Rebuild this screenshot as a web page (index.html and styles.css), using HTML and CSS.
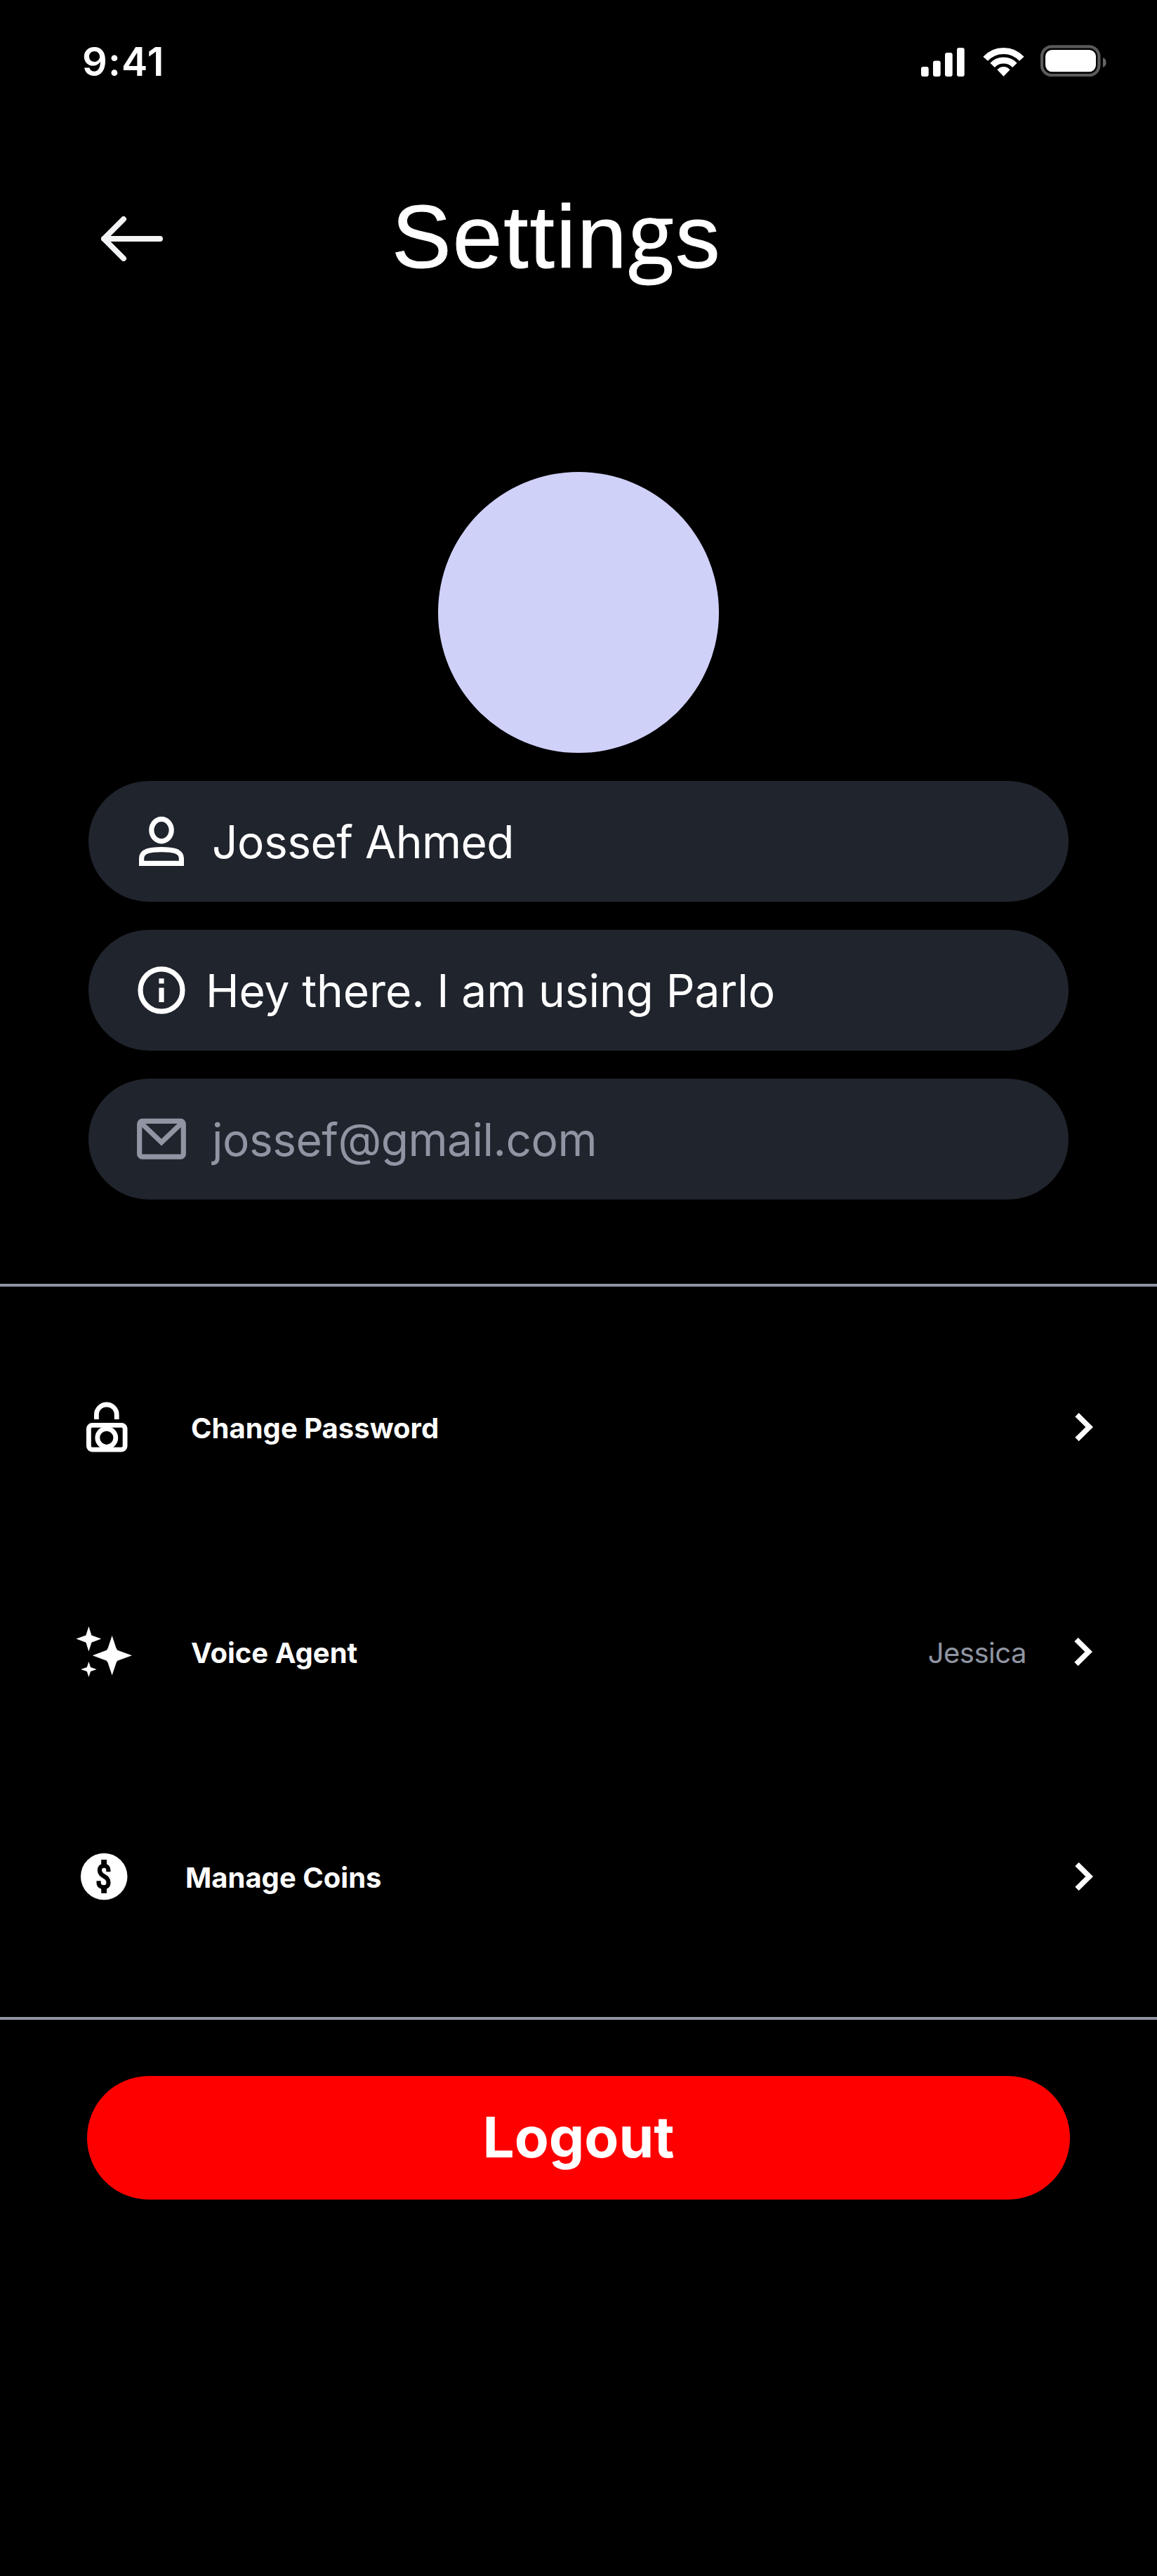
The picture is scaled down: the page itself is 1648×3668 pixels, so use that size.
FILE: index.html
```html
<!DOCTYPE html>
<html lang="en">
<head>
<meta charset="utf-8">
<title>Settings</title>
<link rel="stylesheet" href="styles.css">
</head>
<body>
<div class="status">
  <span class="time">9:41</span>
  <svg class="signal" width="62" height="46" viewBox="0 0 62 46"><rect x="0" y="31" width="10.7" height="14" rx="3"/><rect x="17" y="22.5" width="10.7" height="22.5" rx="3"/><rect x="34" y="11" width="10.7" height="34" rx="3"/><rect x="51" y="4" width="10.7" height="41" rx="3"/></svg>
  <svg class="wifi" width="59" height="46" viewBox="0 -4 59 46"><g fill="none" stroke="#fff" stroke-width="9"><path d="M3.7 15.8A35 35 0 0 1 55.3 15.8"/><path d="M13.6 24.9A22 22 0 0 1 45.4 24.9"/></g><path d="M29.5 40.8L20.4 31.3Q24.2 27 29.5 27Q34.8 27 38.6 31.3Z"/></svg>
  <svg class="battery" width="94" height="46" viewBox="0 0 94 46"><rect x="2" y="2.4" width="81.4" height="40.6" rx="14" fill="none" stroke="#5b5b5b" stroke-width="4.2"/><rect x="7" y="7" width="72" height="31.3" rx="9.5"/><path d="M89 18Q93.6 20 93.6 25Q93.6 30 89 32Z" fill="#666"/></svg>
</div>
<header class="header">
  <svg width="88" height="64" viewBox="0 0 88 64"><path d="M84 32H4M32 4L4 32L32 60" fill="none" stroke="#f3f4f6" stroke-width="8" stroke-linecap="round" stroke-linejoin="round"/></svg>
  <h1 class="title">Settin<span class="title-g">g</span>s</h1>
</header>
<main>
  <div class="avatar"></div>
  <section class="fields">
    <div class="field">
      <svg width="72" height="80" viewBox="0 0 72 80"><g fill="none" stroke="#fff" stroke-width="7.2"><ellipse cx="36" cy="24.1" rx="14.2" ry="15.7"/><path d="M7.6 71.4V64.5C7.6 53.5 20 51.6 36 51.6S64.4 53.5 64.4 64.5V71.4Z"/></g></svg>
      <span class="name">Jossef Ahmed</span>
    </div>
    <div class="field">
      <svg width="72" height="80" viewBox="0 0 72 80"><ellipse cx="36" cy="40" rx="30" ry="30.2" fill="none" stroke="#fff" stroke-width="7.2"/><path d="M32.4 23.2h7.2v7.2h-7.2zM32.4 36.6h7.2v20.4h-7.2z"/></svg>
      <span class="about">Hey there. I am using Parlo</span>
    </div>
    <div class="field muted">
      <svg width="72" height="80" viewBox="0 0 72 80"><g fill="none" stroke="#9095a3" stroke-width="7.2"><rect x="4.7" y="14.4" width="62.6" height="50.8" rx="4"/><path d="M6.5 16.5L36 44.5L65.5 16.5"/></g></svg>
      <span class="email">jossef@gmail.com</span>
    </div>
  </section>
  <nav class="menu">
    <div class="item">
      <svg width="88" height="80" viewBox="0 0 88 80"><g fill="none" stroke="#fff" stroke-width="6.8"><path d="M33.4 27V20.4a14.4 14.4 0 0 1 28.8 0V27"/><rect x="22.4" y="35.4" width="51.7" height="34.7" rx="5"/><circle cx="47.8" cy="53.3" r="13"/></g></svg>
      <span class="label">Change Password</span>
      <svg class="chevron" width="26" height="40" viewBox="0 0 26 40"><path d="M3 2.5L20.7 20L3 37.5"/></svg>
    </div>
    <div class="item">
      <svg width="88" height="80" viewBox="0 0 88 80"><path d="M55.6 15L61.6 33L63.4 35.7L84 43.2L63.4 50.7L61.6 53.4L55.6 71.5L49.6 53.4L47.8 50.7L27.8 43.2L47.8 35.7L49.6 33ZM22.4 1.8L26.4 14.5L40.3 19.6L26.4 24.7L22.4 37.5L18.4 24.7L4.5 19.6L18.4 14.5ZM22.4 52L25 60L33.7 63L25 66L22.4 74L19.8 66L11.1 63L19.8 60Z"/></svg>
      <span class="label">Voice Agent</span>
      <span class="value">Jessica</span>
      <svg class="chevron voice" width="26" height="40" viewBox="0 0 26 40"><path d="M3 2.5L20.7 20L3 37.5"/></svg>
    </div>
    <div class="item">
      <svg width="88" height="80" viewBox="0 0 88 80"><circle cx="44.2" cy="38" r="33.3"/><path d="M40.2 14h7.8v8h-7.8zM40.2 54h7.8v7.7h-7.8z" fill="#000"/><path d="M50.4 31.3V29C50.4 25 48 22.6 44.2 22.6S37.9 25 37.9 29C37.9 39 50.5 36 50.5 46.8C50.5 51 48 53.4 44 53.4S36.6 51 36.6 47V44.3" fill="none" stroke="#000" stroke-width="6.2"/></svg>
      <span class="label coins">Manage Coins</span>
      <svg class="chevron" width="26" height="40" viewBox="0 0 26 40"><path d="M3 2.5L20.7 20L3 37.5"/></svg>
    </div>
  </nav>
  <button class="logout">Logout</button>
</main>
</body>
</html>
```
FILE: styles.css
```css
* { box-sizing: border-box; }
body {
  margin: 0;
  width: 1648px;
  height: 3668px;
  background: #000;
  color: #fff;
  font-family: Inter, "Liberation Sans", sans-serif;
}
svg { display: block; flex: none; fill: #fff; }
.status { display: flex; height: 177px; padding: 0 72px 0 117px; }
.time { margin-right: auto; font-size: 56px; font-weight: 600; line-height: 177px; letter-spacing: 1.2px; }
.signal, .wifi, .battery { margin-top: 64px; }
.wifi { margin-left: 26px; }
.battery { margin-left: 23px; }
.header { display: flex; align-items: center; height: 326px; padding-left: 144px; }
.title {
  margin: 0 0 0 326px;
  padding-bottom: 7px;
  font: 400 127px/144px "Liberation Sans", Arial, sans-serif;
  letter-spacing: 2px;
  white-space: nowrap;
  -webkit-text-stroke: 1px #fff;
}
.title-g { font-family: "Open Sans", sans-serif; font-size: 120px; line-height: 1; vertical-align: 4px; }
.avatar { width: 400px; height: 400px; margin: 169px auto 40px; border-radius: 50%; background: #d0d1f9; }
.fields { display: flex; flex-direction: column; gap: 40px; padding: 0 126px; }
.field {
  display: flex;
  align-items: center;
  height: 172px;
  padding-left: 68px;
  border-radius: 86px;
  background: #20242d;
  font-size: 64px;
  font-weight: 400;
  white-space: nowrap;
}
.muted { color: #9095a3; }
.name { margin-left: 36px; letter-spacing: -0.5px; }
.about { margin-left: 27px; letter-spacing: -0.1px; }
.email { margin-left: 36px; letter-spacing: -0.5px; }
.menu {
  margin-top: 120px;
  padding: 42px 91px 38px 104px;
  border-top: 4px solid #9095a3;
  border-bottom: 4px solid #9095a3;
}
.item { display: flex; align-items: center; height: 320px; }
.label { margin: 0 auto 0 80px; padding-bottom: 2px; font-size: 40px; font-weight: 700; }
.coins { margin-left: 72px; }
.value { padding-bottom: 2px; color: #9095a3; font-size: 40px; font-weight: 400; letter-spacing: -0.5px; }
.chevron { fill: none; stroke: #fff; stroke-width: 7.5; margin-top: -4px; }
.voice { margin-left: 68px; margin-right: 1px; }
.logout {
  display: block;
  width: 1400px;
  height: 176px;
  margin: 80px auto 0;
  padding: 0 0 3px;
  border: 0;
  border-radius: 88px;
  background: #f00;
  color: #fff;
  font: 700 80px Inter, sans-serif;
}
```
